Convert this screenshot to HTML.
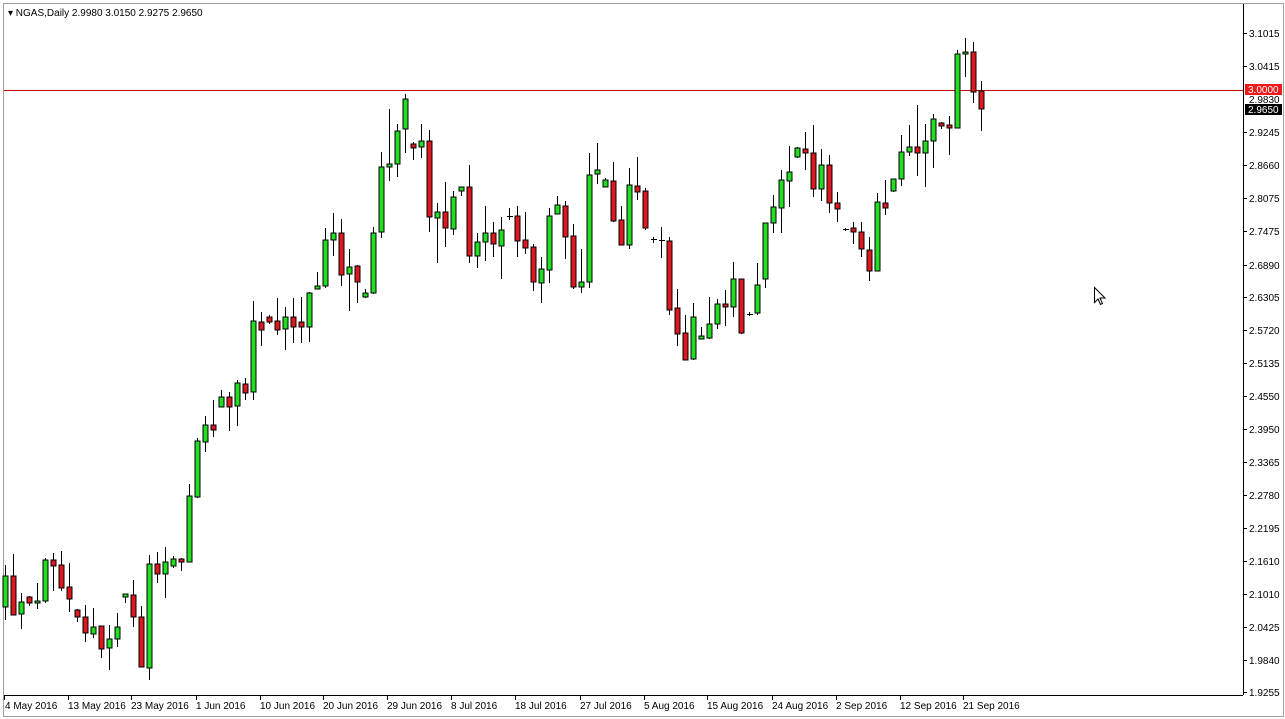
<!DOCTYPE html>
<html><head><meta charset="utf-8"><style>
html,body{margin:0;padding:0;background:#fff;width:1285px;height:719px;overflow:hidden}
svg{display:block;font-family:"Liberation Sans",sans-serif}
</style></head><body>
<svg width="1285" height="719" viewBox="0 0 1285 719" xmlns="http://www.w3.org/2000/svg">
<rect x="0" y="0" width="1285" height="719" fill="#fff"/>
<rect x="3.5" y="3.5" width="1280" height="713" fill="none" stroke="#a0a0a0"/>
<line x1="1243.5" y1="4" x2="1243.5" y2="695" stroke="#000"/>
<line x1="4" y1="695.5" x2="1243" y2="695.5" stroke="#000"/>
<line x1="4" y1="90.5" x2="1243" y2="90.5" stroke="#d00000"/>
<g font-size="10" fill="#000">
<text x="8" y="16" font-size="10">▾ NGAS,Daily  2.9980 3.0150 2.9275 2.9650</text>
</g>
<g stroke="#000" shape-rendering="crispEdges">
<path d="M1243 33.5h4M1243 66.5h4M1243 132.5h4M1243 165.5h4M1243 198.5h4M1243 231.5h4M1243 265.5h4M1243 297.5h4M1243 330.5h4M1243 363.5h4M1243 396.5h4M1243 429.5h4M1243 462.5h4M1243 495.5h4M1243 528.5h4M1243 561.5h4M1243 594.5h4M1243 627.5h4M1243 660.5h4M1243 692.5h4"/>
<path d="M4.5 695v5M68.5 695v5M131.5 695v5M196.5 695v5M260.5 695v5M323.5 695v5M387.5 695v5M451.5 695v5M515.5 695v5M580.5 695v5M644.5 695v5M707.5 695v5M772.5 695v5M836.5 695v5M900.5 695v5M963.5 695v5"/>
</g>
<g font-size="10" fill="#000">
<text x="1249" y="37">3.1015</text><text x="1249" y="70">3.0415</text>
<text x="1249" y="136">2.9245</text><text x="1249" y="169">2.8660</text><text x="1249" y="202">2.8075</text>
<text x="1249" y="235">2.7475</text><text x="1249" y="269">2.6890</text><text x="1249" y="301">2.6305</text>
<text x="1249" y="334">2.5720</text><text x="1249" y="367">2.5135</text><text x="1249" y="400">2.4550</text>
<text x="1249" y="433">2.3950</text><text x="1249" y="466">2.3365</text><text x="1249" y="499">2.2780</text>
<text x="1249" y="532">2.2195</text><text x="1249" y="565">2.1610</text><text x="1249" y="598">2.1010</text>
<text x="1249" y="631">2.0425</text><text x="1249" y="664">1.9840</text><text x="1249" y="696">1.9255</text>
<text x="1249" y="103">2.9830</text>
</g>
<rect x="1245" y="84" width="37" height="11" fill="#f01818"/>
<text x="1248" y="93" font-size="10" fill="#fff">3.0000</text>
<rect x="1245" y="104" width="37" height="11" fill="#000"/>
<text x="1248" y="113" font-size="10" fill="#fff">2.9650</text>
<g font-size="10" fill="#000">
<text x="5" y="709">4 May 2016</text><text x="68" y="709">13 May 2016</text><text x="131" y="709">23 May 2016</text>
<text x="196" y="709">1 Jun 2016</text><text x="260" y="709">10 Jun 2016</text><text x="323" y="709">20 Jun 2016</text>
<text x="387" y="709">29 Jun 2016</text><text x="451" y="709">8 Jul 2016</text><text x="515" y="709">18 Jul 2016</text>
<text x="580" y="709">27 Jul 2016</text><text x="644" y="709">5 Aug 2016</text><text x="707" y="709">15 Aug 2016</text>
<text x="772" y="709">24 Aug 2016</text><text x="836" y="709">2 Sep 2016</text><text x="900" y="709">12 Sep 2016</text>
<text x="963" y="709">21 Sep 2016</text>
</g>
<g shape-rendering="crispEdges">
<path stroke="#000" fill="none" d="M5.5 565V620M13.5 554V615M21.5 593V629M29.5 596V606M37.5 583V609M45.5 558V603M53.5 553V591M61.5 551V591M69.5 563V612M77.5 609V622M85.5 605V642M93.5 608V638M101.5 626V658M109.5 625V670M117.5 613V647M125.5 594V603M133.5 580V627M141.5 606V667M149.5 555V680M157.5 552V583M165.5 547V598M173.5 556V568M181.5 558V571M189.5 484V562M197.5 438V498M205.5 416V452M213.5 400V437M221.5 390V407M229.5 392V431M237.5 380V426M245.5 378V400M253.5 301V400M261.5 312V346M269.5 315V324M277.5 298V335M285.5 307V350M293.5 298V343M301.5 297V343M309.5 292V342M317.5 272V289M325.5 228V288M333.5 213V256M341.5 219V286M349.5 249V311M357.5 265V303M365.5 289V298M373.5 227V294M381.5 152V238M389.5 109V181M397.5 124V177M405.5 94V153M413.5 142V160M421.5 124V158M429.5 130V232M437.5 203V263M445.5 182V247M453.5 191V235M461.5 187V196M469.5 165V263M477.5 233V268M485.5 206V261M493.5 222V257M501.5 217V279M509.5 208V220M517.5 206V257M525.5 212V254M533.5 244V291M541.5 257V303M549.5 208V283M557.5 196V214M565.5 201V259M573.5 224V289M581.5 249V293M589.5 153V288M597.5 143V184M605.5 178V187M613.5 162V222M621.5 206V245M629.5 168V249M637.5 157V200M645.5 188V230M653.5 237V243M661.5 227V258M669.5 237V315M677.5 289V346M685.5 315V360M693.5 303V360M701.5 327V339M709.5 297V339M717.5 299V329M725.5 290V326M733.5 262V317M741.5 279V334M749.5 312V316M757.5 263V315M765.5 223V288M773.5 195V233M781.5 170V233M789.5 146V207M797.5 147V158M805.5 132V170M813.5 125V197M821.5 149V201M829.5 155V213M837.5 192V222M845.5 228V231M853.5 222V244M861.5 222V257M869.5 237V281M877.5 193V271M885.5 180V215M893.5 179V192M901.5 135V186M909.5 125V156M917.5 105V176M925.5 124V187M933.5 114V168M941.5 122V129M949.5 116V155M957.5 50V128M965.5 38V77M973.5 42V103M981.5 81V131M507 216.5h6M651 239.5h6M659 240.5h6M747 314.5h6M843 229.5h6"/>
<g stroke="#000" fill="#22dd22">
<rect x="3" y="576" width="5" height="31"/><rect x="19" y="602" width="5" height="12"/><rect x="35" y="601" width="5" height="2"/><rect x="43" y="560" width="5" height="41"/><rect x="91" y="627" width="5" height="7"/><rect x="107" y="639" width="5" height="9"/><rect x="115" y="627" width="5" height="12"/><rect x="123" y="594" width="5" height="3"/><rect x="147" y="564" width="5" height="104"/><rect x="163" y="562" width="5" height="12"/><rect x="171" y="559" width="5" height="7"/><rect x="187" y="496" width="5" height="66"/><rect x="195" y="441" width="5" height="56"/><rect x="203" y="425" width="5" height="17"/><rect x="219" y="397" width="5" height="10"/><rect x="235" y="383" width="5" height="23"/><rect x="251" y="321" width="5" height="71"/><rect x="283" y="317" width="5" height="12"/><rect x="307" y="293" width="5" height="34"/><rect x="315" y="286" width="5" height="3"/><rect x="323" y="240" width="5" height="46"/><rect x="331" y="233" width="5" height="7"/><rect x="347" y="267" width="5" height="7"/><rect x="363" y="293" width="5" height="4"/><rect x="371" y="233" width="5" height="60"/><rect x="379" y="167" width="5" height="65"/><rect x="387" y="164" width="5" height="3"/><rect x="395" y="131" width="5" height="33"/><rect x="403" y="99" width="5" height="30"/><rect x="419" y="141" width="5" height="6"/><rect x="435" y="212" width="5" height="6"/><rect x="451" y="197" width="5" height="32"/><rect x="459" y="187" width="5" height="4"/><rect x="475" y="242" width="5" height="14"/><rect x="483" y="233" width="5" height="9"/><rect x="499" y="230" width="5" height="16"/><rect x="539" y="269" width="5" height="14"/><rect x="547" y="216" width="5" height="54"/><rect x="555" y="205" width="5" height="9"/><rect x="579" y="282" width="5" height="5"/><rect x="587" y="175" width="5" height="107"/><rect x="595" y="170" width="5" height="4"/><rect x="603" y="180" width="5" height="7"/><rect x="627" y="185" width="5" height="60"/><rect x="691" y="317" width="5" height="42"/><rect x="699" y="336" width="5" height="3"/><rect x="707" y="324" width="5" height="14"/><rect x="715" y="304" width="5" height="20"/><rect x="731" y="279" width="5" height="28"/><rect x="755" y="285" width="5" height="28"/><rect x="763" y="223" width="5" height="56"/><rect x="771" y="207" width="5" height="16"/><rect x="779" y="180" width="5" height="28"/><rect x="787" y="172" width="5" height="9"/><rect x="795" y="148" width="5" height="9"/><rect x="819" y="165" width="5" height="24"/><rect x="875" y="202" width="5" height="69"/><rect x="891" y="179" width="5" height="12"/><rect x="899" y="152" width="5" height="27"/><rect x="907" y="147" width="5" height="5"/><rect x="923" y="141" width="5" height="12"/><rect x="931" y="119" width="5" height="22"/><rect x="955" y="54" width="5" height="74"/><rect x="963" y="52" width="5" height="2"/>
</g>
<g stroke="#000" fill="#dd1820">
<rect x="11" y="576" width="5" height="39"/><rect x="27" y="597" width="5" height="6"/><rect x="51" y="560" width="5" height="6"/><rect x="59" y="565" width="5" height="23"/><rect x="67" y="587" width="5" height="12"/><rect x="75" y="610" width="5" height="7"/><rect x="83" y="617" width="5" height="16"/><rect x="99" y="626" width="5" height="23"/><rect x="131" y="595" width="5" height="22"/><rect x="139" y="617" width="5" height="50"/><rect x="155" y="564" width="5" height="10"/><rect x="179" y="559" width="5" height="3"/><rect x="211" y="425" width="5" height="5"/><rect x="227" y="397" width="5" height="10"/><rect x="243" y="384" width="5" height="9"/><rect x="259" y="322" width="5" height="8"/><rect x="267" y="317" width="5" height="5"/><rect x="275" y="321" width="5" height="9"/><rect x="291" y="317" width="5" height="10"/><rect x="299" y="322" width="5" height="5"/><rect x="339" y="233" width="5" height="42"/><rect x="355" y="266" width="5" height="16"/><rect x="411" y="144" width="5" height="4"/><rect x="427" y="141" width="5" height="76"/><rect x="443" y="212" width="5" height="16"/><rect x="467" y="187" width="5" height="69"/><rect x="491" y="233" width="5" height="11"/><rect x="515" y="216" width="5" height="25"/><rect x="523" y="240" width="5" height="8"/><rect x="531" y="247" width="5" height="35"/><rect x="563" y="206" width="5" height="31"/><rect x="571" y="236" width="5" height="51"/><rect x="611" y="181" width="5" height="40"/><rect x="619" y="220" width="5" height="25"/><rect x="635" y="186" width="5" height="6"/><rect x="643" y="191" width="5" height="37"/><rect x="667" y="241" width="5" height="69"/><rect x="675" y="308" width="5" height="26"/><rect x="683" y="333" width="5" height="27"/><rect x="723" y="304" width="5" height="3"/><rect x="739" y="279" width="5" height="54"/><rect x="803" y="149" width="5" height="4"/><rect x="811" y="153" width="5" height="36"/><rect x="827" y="165" width="5" height="38"/><rect x="835" y="203" width="5" height="6"/><rect x="851" y="228" width="5" height="4"/><rect x="859" y="232" width="5" height="17"/><rect x="867" y="250" width="5" height="21"/><rect x="883" y="203" width="5" height="5"/><rect x="915" y="147" width="5" height="6"/><rect x="939" y="123" width="5" height="3"/><rect x="947" y="125" width="5" height="3"/><rect x="971" y="52" width="5" height="40"/><rect x="979" y="91" width="5" height="18"/>
</g>
</g>
<path d="M1094.5 287.5v15l3.5-3.5 2.5 5.5 2-1-2.5-5.5h5z" fill="#fff" stroke="#000"/>
</svg>
</body></html>
